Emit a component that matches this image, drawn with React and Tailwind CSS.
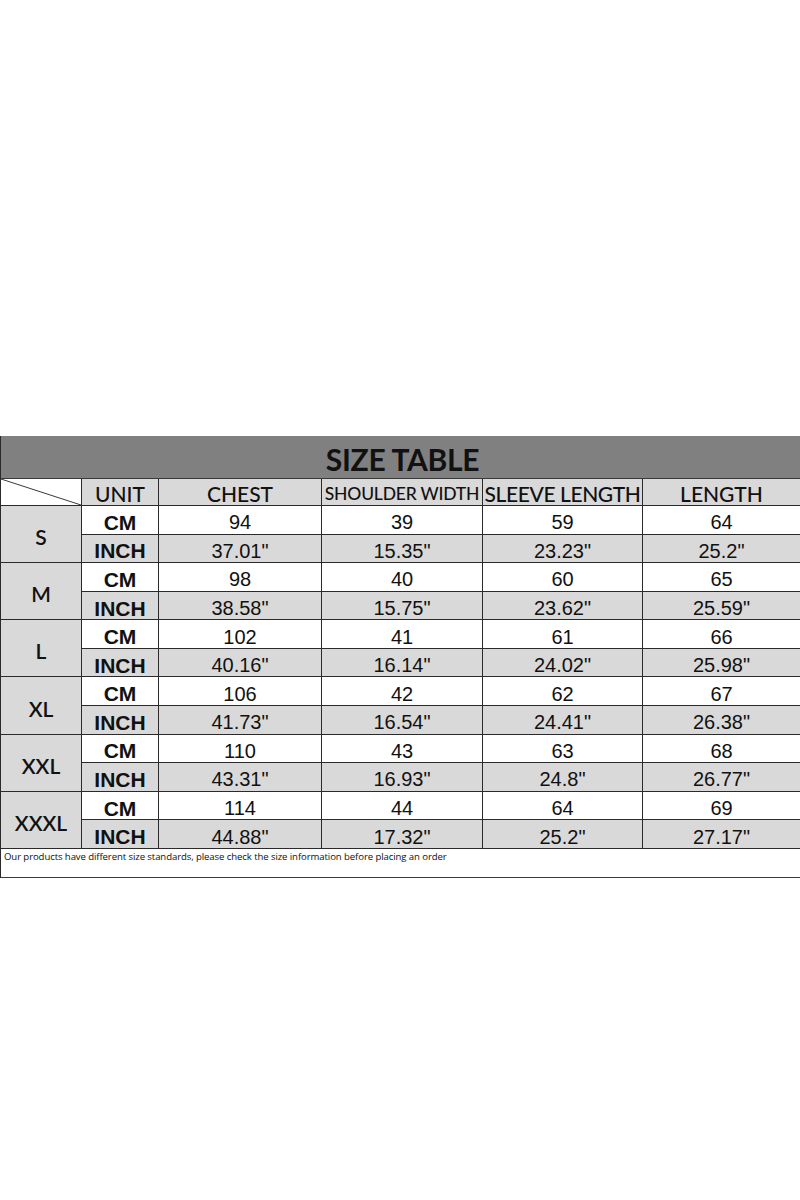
const sizes = [
  { label: "S", cm: ["94", "39", "59", "64"], inch: ['37.01"', '15.35"', '23.23"', '25.2"'] },
  { label: "M", cm: ["98", "40", "60", "65"], inch: ['38.58"', '15.75"', '23.62"', '25.59"'] },
  { label: "L", cm: ["102", "41", "61", "66"], inch: ['40.16"', '16.14"', '24.02"', '25.98"'] },
  { label: "XL", cm: ["106", "42", "62", "67"], inch: ['41.73"', '16.54"', '24.41"', '26.38"'] },
  { label: "XXL", cm: ["110", "43", "63", "68"], inch: ['43.31"', '16.93"', '24.8"', '26.77"'] },
  { label: "XXXL", cm: ["114", "44", "64", "69"], inch: ['44.88"', '17.32"', '25.2"', '27.17"'] },
];

const head =
  "flex items-center justify-center pt-[3px] border-b border-[#2a2a2a] bg-[#d9d9d9] whitespace-nowrap font-['Lato','Open_Sans',sans-serif] font-medium text-[#111] leading-none";
const cell =
  "flex items-center justify-center pt-[5px] border-r border-b border-[#2a2a2a] font-['Liberation_Sans',Arial,sans-serif] text-[20px] leading-none text-[#111]";

export default function App() {
  return (
    <div className="w-[800px] h-[1200px] bg-white overflow-hidden pt-[436px]">
      <div className="border-l border-[#2a2a2a]">
        {/* title band */}
        <div className="h-[43px] bg-[#808080] border-b border-[#3a3a3a] flex items-center justify-center pl-[4px] pt-[3px]">
          <span className="font-['Lato','Open_Sans',sans-serif] font-bold text-[30px] leading-none text-[#111] tracking-[-0.3px]">
            SIZE TABLE
          </span>
        </div>

        <div className="grid grid-cols-[81px_77px_163px_161px_160px_1fr] grid-rows-[27px_repeat(12,28.58px)]">
          {/* header row */}
          <div className="relative border-r border-b border-[#2a2a2a] bg-white">
            <svg className="absolute inset-0 w-full h-full" viewBox="0 0 81 27" preserveAspectRatio="none">
              <line x1="0" y1="0" x2="81" y2="27" stroke="#333" strokeWidth="1" />
            </svg>
          </div>
          <div className={`${head} border-r text-[21px]`}>UNIT</div>
          <div className={`${head} border-r text-[21px]`}>CHEST</div>
          <div className={`${head} border-r text-[17.5px] tracking-[-0.2px]`}>SHOULDER WIDTH</div>
          <div className={`${head} border-r text-[21px] tracking-[-0.4px]`}>SLEEVE LENGTH</div>
          <div className={`${head} text-[21px]`}>LENGTH</div>

          {sizes.map((s) => (
            <>
              <div
                key={s.label}
                className="row-span-2 flex items-center justify-center pt-[5px] border-r border-b border-[#2a2a2a] bg-[#d9d9d9] font-['Lato','Open_Sans',sans-serif] font-semibold text-[21px] leading-none text-[#111]"
              >
                {s.label}
              </div>
              <div className={`${cell} bg-white font-bold text-[21px]`}>CM</div>
              {s.cm.map((v, i) => (
                <div key={"c" + i} className={`${cell} bg-white ${i === 3 ? "border-r-0" : ""}`}>{v}</div>
              ))}
              <div className={`${cell} bg-[#d9d9d9] font-bold text-[21px]`}>INCH</div>
              {s.inch.map((v, i) => (
                <div key={"i" + i} className={`${cell} bg-[#d9d9d9] ${i === 3 ? "border-r-0" : ""}`}>{v}</div>
              ))}
            </>
          ))}
        </div>

        {/* note */}
        <div className="h-[29px] border-b border-[#3a3a3a] pl-[3px] pt-[1px]">
          <p className="font-['Open_Sans',sans-serif] text-[9.6px] leading-[13px] text-[#111] tracking-[-0.1px]">
            Our products have different size standards, please check the size information before placing an order
          </p>
        </div>
      </div>
    </div>
  );
}
